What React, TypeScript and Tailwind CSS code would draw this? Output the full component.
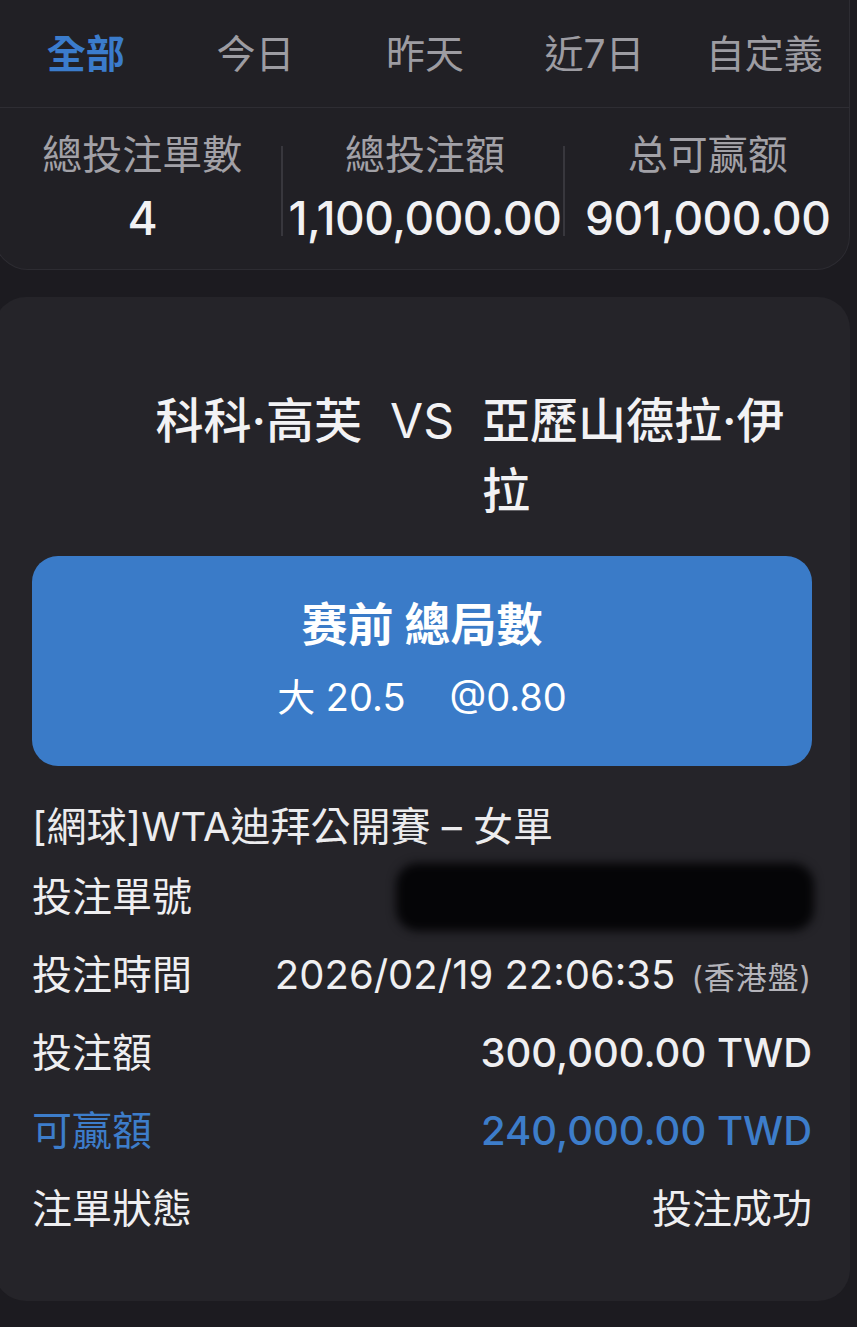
const font = { fontFamily: 'Inter, "Noto Sans CJK TC", "Noto Sans", sans-serif' }

const tabs = ['全部', '今日', '昨天', '近7日', '自定義']

const stats = [
  { label: '總投注單數', value: '4' },
  { label: '總投注額', value: '1,100,000.00' },
  { label: '总可赢额', value: '901,000.00' },
]

function Row({ label, children, blue }: { label: string; children: React.ReactNode; blue?: boolean }) {
  return (
    <div className="flex h-[78px] items-center justify-between">
      <span className={`text-[40px] leading-none ${blue ? 'text-[#3d7dca]' : 'text-[#efeff1]'}`}>{label}</span>
      {children}
    </div>
  )
}

export default function App() {
  return (
    <div className="min-h-[1327px] w-[857px] overflow-hidden bg-[#1c1b20] pb-[27px]" style={font}>
      {/* summary panel */}
      <div className="-ml-[6px] w-[856px] rounded-b-[34px] border border-t-0 border-[#2d2c32] bg-[#212025]">
        <div className="grid h-[108px] grid-cols-5 items-center border-b border-[#2e2d33] pl-[6px]">
          {tabs.map((t, i) => (
            <div
              key={t}
              className={`text-center text-[39px] leading-none ${i === 0 ? 'font-semibold text-[#3b7ccc]' : 'text-[#9d9ca2]'}`}
            >
              {t}
            </div>
          ))}
        </div>
        <div className="grid grid-cols-3 pb-[26px] pl-[6px] pt-[22px]">
          {stats.map((s, i) => (
            <div key={s.label} className="relative flex flex-col items-center">
              {i > 0 && <div className="absolute left-[-3px] top-[16px] h-[90px] w-[2px] bg-[#38373d]" />}
              <div className="h-[50px] text-[40px] leading-[50px] text-[#a2a1a7]">{s.label}</div>
              <div className="mt-[13px] h-[50px] whitespace-nowrap text-[46px] font-medium leading-[50px] tracking-[-0.5px] text-[#f1f1f3]">
                {s.value}
              </div>
            </div>
          ))}
        </div>
      </div>

      {/* bet card */}
      <div className="-ml-[6px] mt-[27px] w-[856px] rounded-[32px] bg-[#252429] pb-[53px] pl-[38px] pr-[38px] pt-[89px]">
        <div className="flex justify-center text-[48px] font-medium leading-[70px] text-[#f2f2f4]">
          <div className="w-[320px] text-right">科科·高芙</div>
          <div className="mx-[28px] font-normal">VS</div>
          <div className="w-[320px]">亞歷山德拉·伊拉</div>
        </div>

        <div className="mt-[30px] flex h-[210px] flex-col items-center rounded-[26px] bg-[#3a7bc8] pt-[40px] text-white">
          <div className="text-[46px] font-bold leading-[56px]">赛前 總局數</div>
          <div className="mt-[20px] text-[38px] leading-[50px]">
            大 20.5<span className="ml-[44px]">@0.80</span>
          </div>
        </div>

        <div className="mt-[36px] text-[40px] leading-[50px] text-[#ececee]">[網球]WTA迪拜公開賽 – 女單</div>

        <div className="mt-[6px]">
          <Row label="投注單號">
            <div className="mr-[-2px] h-[68px] w-[418px] rounded-[22px] bg-[#050507] blur-[5px]" />
          </Row>
          <Row label="投注時間">
            <span className="whitespace-nowrap text-[40px] leading-none text-[#efeff1]">
              2026/02/19 22:06:35
              <span className="ml-[16px] text-[31px] tracking-[1px] text-[#b5b4ba]">(香港盤)</span>
            </span>
          </Row>
          <Row label="投注額">
            <span className="text-[40px] font-medium leading-none text-[#efeff1]">300,000.00 TWD</span>
          </Row>
          <Row label="可贏額" blue>
            <span className="text-[40px] font-medium leading-none text-[#3d7dca]">240,000.00 TWD</span>
          </Row>
          <Row label="注單狀態">
            <span className="text-[40px] leading-none text-[#efeff1]">投注成功</span>
          </Row>
        </div>
      </div>
    </div>
  )
}
